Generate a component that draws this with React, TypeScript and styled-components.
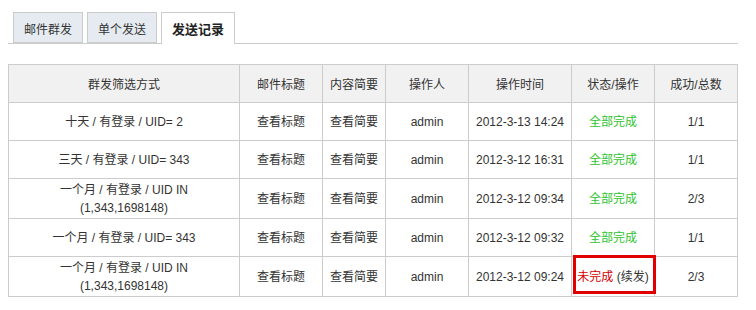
import React from 'react'
import styled, { createGlobalStyle } from 'styled-components'

type Row = {
  filter: React.ReactNode
  double?: boolean
  operator: string
  time: string
  done: boolean
  count: string
}

const uidIn = (
  <>
    一个月 / 有登录 / UID IN
    <br />
    (1,343,1698148)
  </>
)

const rows: Row[] = [
  { filter: '十天 / 有登录 / UID= 2', operator: 'admin', time: '2012-3-13 14:24', done: true, count: '1/1' },
  { filter: '三天 / 有登录 / UID= 343', operator: 'admin', time: '2012-3-12 16:31', done: true, count: '1/1' },
  { filter: uidIn, double: true, operator: 'admin', time: '2012-3-12 09:34', done: true, count: '2/3' },
  { filter: '一个月 / 有登录 / UID= 343', operator: 'admin', time: '2012-3-12 09:32', done: true, count: '1/1' },
  { filter: uidIn, double: true, operator: 'admin', time: '2012-3-12 09:24', done: false, count: '2/3' },
]

const tabs = ['邮件群发', '单个发送', '发送记录']
const columns = [
  { title: '群发筛选方式', width: 231 },
  { title: '邮件标题', width: 83 },
  { title: '内容简要', width: 63 },
  { title: '操作人', width: 83 },
  { title: '操作时间', width: 103 },
  { title: '状态/操作', width: 83 },
  { title: '成功/总数', width: 83 },
]

const App = () => {
  return (
    <Page>
      <GlobalStyle />
      <TabBar>
        {tabs.map((tab, i) => (
          <Tab key={tab} active={i === 2}>
            {tab}
          </Tab>
        ))}
      </TabBar>

      <TableWrap>
        <Table>
          <colgroup>
            {columns.map((col) => (
              <col key={col.title} style={{ width: col.width }} />
            ))}
          </colgroup>
          <thead>
            <tr>
              {columns.map((col) => (
                <Th key={col.title}>{col.title}</Th>
              ))}
            </tr>
          </thead>
          <tbody>
            {rows.map((row, i) => (
              <Tr key={i} double={row.double}>
                <td>{row.filter}</td>
                <td>查看标题</td>
                <td>查看简要</td>
                <td>{row.operator}</td>
                <td>{row.time}</td>
                <td>
                  {row.done ? (
                    <Status done>全部完成</Status>
                  ) : (
                    <>
                      <Status done={false}>未完成</Status> (续发)
                    </>
                  )}
                </td>
                <td>{row.count}</td>
              </Tr>
            ))}
          </tbody>
        </Table>
        <Highlight />
        <HighlightNext />
      </TableWrap>
    </Page>
  )
}

export default App

const GlobalStyle = createGlobalStyle`
  body {
    margin: 8px;
    background: #fff;
    font-family: "Liberation Sans", "Noto Sans CJK SC", sans-serif;
    font-size: 12px;
    color: #333;
  }
`

const Page = styled.div`
  width: 730px;
  padding-top: 4px;
`

const TabBar = styled.div`
  display: flex;
  align-items: flex-end;
  gap: 4px;
  padding-left: 5px;
  height: 31px;
  border-bottom: 1px solid #ccc;
`

const Tab = styled.div<{ active?: boolean }>`
  box-sizing: border-box;
  display: flex;
  align-items: center;
  justify-content: center;
  height: ${({ active }) => (active ? '32px' : '31px')};
  width: ${({ active }) => (active ? '74px' : '70px')};
  margin-bottom: ${({ active }) => (active ? '-1px' : '0')};
  border: 1px solid #ccc;
  border-bottom: ${({ active }) => (active ? 'none' : '1px solid #ccc')};
  background: ${({ active }) => (active ? '#fff' : '#e5ebf1')};
  font-size: ${({ active }) => (active ? '13px' : '12px')};
  font-weight: ${({ active }) => (active ? 'bold' : 'normal')};
  color: ${({ active }) => (active ? '#222' : '#333')};
  padding-top: ${({ active }) => (active ? '0' : '1px')};
`

const TableWrap = styled.div`
  position: relative;
  margin-top: 20px;
`

const Table = styled.table`
  border-collapse: collapse;
  table-layout: fixed;
  width: 730px;
`

const Th = styled.th`
  height: 37px;
  padding: 0 4px;
  border: 1px solid #ccc;
  background: #f1f1f1;
  font-weight: normal;
  text-align: center;
  color: #333;
`

const Tr = styled.tr<{ double?: boolean }>`
  & > td {
    height: 37px;
    padding: ${({ double }) => (double ? '1px 4px' : '0 4px')};
    border: 1px solid #ccc;
    text-align: center;
    line-height: 18px;
    color: #333;
  }
`

const Status = styled.span<{ done: boolean }>`
  color: ${({ done }) => (done ? '#2ec42e' : '#d40000')};
`

const Highlight = styled.div`
  position: absolute;
  left: 565px;
  top: 191px;
  width: 77px;
  height: 33px;
  border: 3px solid #e00000;
`

const HighlightNext = styled.div`
  position: absolute;
  left: 565px;
  top: 244px;
  width: 87px;
  height: 2px;
  background: #e00000;
`
